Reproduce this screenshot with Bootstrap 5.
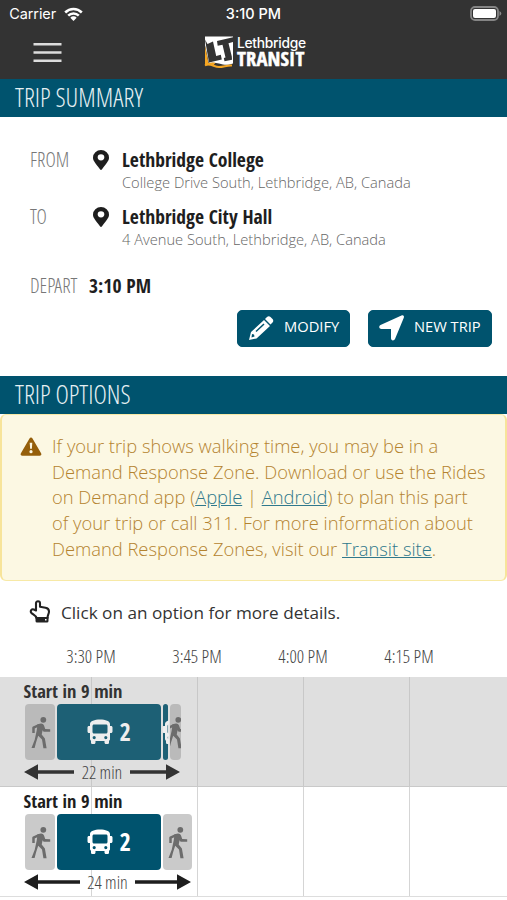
<!DOCTYPE html>
<html lang="en">
<head>
<meta charset="utf-8">
<meta name="viewport" content="width=device-width, initial-scale=1">
<title>Lethbridge Transit – Trip Options</title>
<link href="https://cdn.jsdelivr.net/npm/bootstrap@5.3.0/dist/css/bootstrap.min.css" rel="stylesheet">
<style>
  body { font-family: "Open Sans", "Noto Sans", sans-serif; color: #1e1e1e; background: #fff; width: 507px; height: 900px; overflow: hidden; }
  .cond { font-family: "Open Sans Condensed", "Open Sans", sans-serif; font-stretch: 75%; white-space: nowrap; }
  .cond-light { font-family: "Open Sans Condensed Light", "Open Sans", sans-serif; font-stretch: 75%; font-weight: 300; white-space: nowrap; }
  .topbar { background: #333; color: #fff; height: 79px; }
  .status-row { height: 27px; font: 500 14.5px/27px Inter, sans-serif; }
  .status-row > div { width: 33.333%; }
  .carrier { letter-spacing: -.1px; font-weight: 400; }
  .nav-row { height: 52px; }
  .brand-a { font: 500 13.8px/15px Inter, sans-serif; letter-spacing: -.28px; margin-top: 1px; }
  .brand-b { font-weight: 800; font-size: 20.5px; line-height: 15px; letter-spacing: .15px; -webkit-text-stroke: .5px #fff; }
  .section-title { background: #00536e; color: #e6f0f3; height: 38px; padding-left: 15px; font-size: 25.7px; line-height: 37px; }
  .summary { height: 259px; padding: 30px 15px 0 30px; }
  .lbl { color: #777; font-size: 19.8px; line-height: 26px; }
  .lbl-col { width: 63px; }
  .depart-col { width: 59px; }
  .pin-col { width: 29px; padding-top: 3px; }
  .place { font-weight: 700; font-size: 19.6px; line-height: 26px; }
  .addr { font-weight: 300; font-size: 14.68px; line-height: 19px; color: #666; }
  .stop { height: 57px; }
  .actions { margin-top: 10.5px; }
  .btn-trip { --bs-btn-bg: #00536e; --bs-btn-color: #fff; --bs-btn-border-color: #00536e; height: 37px; border-radius: 5px; font-size: 14.7px; line-height: 20px; white-space: nowrap; }
  .btn-trip span { padding-bottom: 4px; }
  .btn-modify { width: 113px; margin-right: 18px; }
  .btn-modify svg { margin-left: 9px; margin-right: 9px; }
  .btn-new { width: 124px; }
  .notice { height: 167px; background: #fcf8e3; border: 1px solid #f7e9a6; border-left: 2px solid #f7e49a; border-right: 2px solid #f7e49a; border-radius: 6px; color: #b4832f; font-weight: 300; font-size: 18.35px; line-height: 25.7px; padding: 18px 0 0 18px; gap: 10px; }
  .notice p { white-space: nowrap; }
  .notice a { color: #2f788c; }
  .hint { height: 63px; padding: 19px 0 0 29px; font-size: 17.15px; line-height: 26px; color: #333; gap: 10px; }
  .times { height: 33px; padding-left: 38px; font-size: 18.4px; line-height: 24px; color: #444; }
  .times span { width: 106px; text-align: center; }
  .option { height: 110px; padding-left: 24px; border-bottom: 1px solid #ddd; background: repeating-linear-gradient(to right, transparent 0 105px, #d5d5d5 105px 106px) 92px 0 / 424px 100% no-repeat, linear-gradient(#d5d5d5,#d5d5d5) 91px 0 / 1px 100% no-repeat #fff; }
  .option.active { background: repeating-linear-gradient(to right, transparent 0 105px, #c8c8c8 105px 106px) 92px 0 / 424px 100% no-repeat, linear-gradient(#c8c8c8,#c8c8c8) 91px 0 / 1px 100% no-repeat #dfdfdf; border-color: #c9c9c9; color: #333; }
  .start { font-size: 18.5px; line-height: 22px; font-weight: 700; padding-top: 3px; height: 27px; margin-left: -.5px; }
  .legs { gap: 2px; padding-left: 1px; }
  .leg { height: 56px; border-radius: 4px; overflow: hidden; }
  .walk { background: #cacaca; color: #6c6c6c; }
  .active .walk { background: #bababa; }
  .ride { background: #00536e; color: #fff; font-size: 24.5px; font-weight: 700; line-height: 56px; width: 103.5px; }
  .ride svg { margin-right: 7px; }
  .active .ride { background: #1d6075; color: #eee; }
  .active .ride.w5 { width: 5px; overflow: visible; }
  .ride-clip { width: 7px; height: 26px; overflow: hidden; display: flex; flex: none; }
  .w30 { width: 30px; } .w29 { width: 29px; } .w11 { width: 11px; }
  .walk svg { margin-left: 1px; }
  .span-22 { width: 156px; } .span-24 { width: 167px; }
  .duration { line-height: 24px; }
  .duration .cond-light { font-size: 18.2px; color: #444; }
  svg { display: block; flex: none; }
</style>
<script src="https://cdn.jsdelivr.net/npm/bootstrap@5.3.0/dist/js/bootstrap.bundle.min.js"></script>
</head>
<body>
<svg width="0" height="0" class="d-none">
  <symbol id="pin" viewBox="0 0 384 512" preserveAspectRatio="none"><path fill="currentColor" fill-rule="evenodd" d="M172 502C27 291 0 270 0 192a192 192 0 0 1 384 0c0 78-27 99-172 310-9 13-31 13-40 0zM192 267a80 80 0 1 0 0-160 80 80 0 0 0 0 160z"/></symbol>
  <symbol id="bus" viewBox="0 0 26 26"><path fill="currentColor" fill-rule="evenodd" d="M13 .5c5.500 0 10 1.500 10 4.500v2h1c1 0 1.500.7 1.500 1.500v4c0 .9-.6 1.500-1.500 1.500h-1v6c0 1-.5 1.500-1 1.800V23.500c0 1-.7 1.500-1.500 1.500h-1.500c-.9 0-1.500-.6-1.500-1.500V22h-9v1.500c0 .9-.6 1.500-1.500 1.500H5.500C4.700 25 4 24.500 4 23.500V21.800c-.6-.4-1-1-1-1.800v-6H2C1.100 14 .5 13.400.5 12.500v-4C.5 7.700 1 7 2 7h1V5C3 2 7.500.5 13 .5zM7 5.500C6 5.500 5.500 6.200 5.500 7v6c0 .9.600 1.500 1.500 1.500h12c.9 0 1.500-.6 1.500-1.500V7c0-.8-.5-1.500-1.500-1.500zM7.200 17a1.600 1.600 0 1 0 0 3.200 1.600 1.600 0 0 0 0-3.200zM18.800 17a1.600 1.600 0 1 0 0 3.200 1.600 1.600 0 0 0 0-3.200z"/></symbol>
  <symbol id="walker" viewBox="0 0 20 33"><circle cx="12.300" cy="3.800" r="2.900" fill="currentColor"/><path fill="none" stroke="currentColor" stroke-linejoin="round" d="M2.500 17V11.700L8 9.200" stroke-width="2.500"/><path fill="currentColor" d="M6.500 8.200l3.500-.7c1.800 0 2.800 1 3.200 2.400l1 3.100 5 .2v2.500h-6.600l-1-1.500-.9 4.200 3.200 4 1.700 9.800h-3.200l-1.400-8.600-3.800-3.800-2.100 6.500L3.600 32H.5l3.200-8.300 2-9.200z"/></symbol>
</svg>

<header class="topbar">
  <div class="status-row d-flex">
    <div class="d-flex align-items-center ps-2"><span class="carrier me-1 pe-1">&#8202;Carrier</span>
      <svg width="19" height="14" viewBox="0 0 19 14"><g fill="none" stroke="#fff" stroke-width="2.500"><path d="M1.200 5.500a11.700 11.700 0 0 1 16.600 0"/><path d="M4.200 8.600a7.500 7.500 0 0 1 10.600 0"/></g><path fill="#fff" d="M6.300 10.700a4.500 4.500 0 0 1 6.400 0L9.500 13.900z"/></svg>
    </div>
    <div class="text-center">3:10 PM</div>
    <div class="d-flex justify-content-end align-items-center">
      <svg class="me-1" width="33" height="15" viewBox="0 0 33 15"><rect x="1" y="1" width="27" height="13" rx="4" fill="none" stroke="#858585" stroke-width="1.800"/><rect x="3" y="3" width="23" height="9" rx="2" fill="#fff"/><path d="M29.500 5v5c2.500-1.500 2.500-3.500 0-5z" fill="#8b8b8b"/></svg>
    </div>
  </div>
  <nav class="nav-row d-flex">
    <svg class="mt-3 ms-4" width="180" height="21" viewBox="0 0 180 21"><path d="M9.500 1.300h28M9.500 9.500h28M9.500 17.700h28" stroke="#ddd" stroke-width="2.600"/></svg>
    <div class="d-flex pt-2">
      <svg width="29" height="34" viewBox="0 0 29 34"><path fill="#fff" d="M1 1.500h28v27c-5 2-9 1.500-14 0-4-1-8-1-10 0L1 10z"/><path fill="#f5a623" d="M1 11l3.500 17q3-1 7-.3l-2 2.500L1 30z"/><path fill="none" stroke="#f5a623" stroke-width="2" d="M1 30.500c5-3 9 1.500 14 1.500s8-2 13-1.500"/><path fill="#333" d="M1 4.500l2.500 4.500L9 6.500l3.200 14.500 4.600-1.200 1 4.700L5 27.500zM13 6l16-3.700V7l-4.500 1.200 3.300 13.300.2 3.300-7.500 1.500-.7-3.300 1.700-.6L18.500 9.700l-4.800 1.100z"/></svg>
      <div class="ms-1"><div class="brand-a">Lethbridge</div><div class="brand-b cond">TRANSIT</div></div>
    </div>
  </nav>
</header>

<h1 class="section-title cond-light m-0">TRIP SUMMARY</h1>
<section class="summary">
  <div class="stop d-flex">
    <div class="lbl lbl-col cond-light">FROM</div>
    <div class="pin-col"><svg width="16" height="20"><use href="#pin"/></svg></div>
    <div><div class="place cond">Lethbridge College</div><div class="addr">College Drive South, Lethbridge, AB, Canada</div></div>
  </div>
  <div class="stop d-flex">
    <div class="lbl lbl-col cond-light">TO</div>
    <div class="pin-col"><svg width="16" height="20"><use href="#pin"/></svg></div>
    <div><div class="place cond">Lethbridge City Hall</div><div class="addr">4 Avenue South, Lethbridge, AB, Canada</div></div>
  </div>
  <div class="d-flex pt-2 mt-1"><span class="lbl depart-col cond-light">DEPART</span><span class="place cond">3:10 PM</span></div>
  <div class="actions d-flex justify-content-end">
    <button class="btn btn-trip btn-modify d-flex align-items-center p-0">
      <svg width="28" height="28" viewBox="0 0 28 28"><path fill="#fff" d="M4 18L17 6l6 6L9.500 24.500 2 26zM18 5l2-2c1-1 2.500-1 3.500 0l2 2c1 1 1 2.500 0 3.500l-2 2z"/><path d="M9 17.500l8-7.500" stroke="#00536e" stroke-width="1.500"/><path fill="#00536e" d="M5 20l2 .5.500 2-3 1z"/></svg>
      <span>MODIFY</span></button>
    <button class="btn btn-trip btn-new d-flex align-items-center p-0">
      <svg class="ms-2 me-2" width="29" height="28" viewBox="0 0 29 28"><path fill="#fff" d="M24.500 1.500c1.700-.7 3 .5 2.300 2.200L18 25c-.8 2-4 2-4-.7V15H4.500C2 15 1.500 12 3.500 11z"/></svg>
      <span>NEW TRIP</span></button>
  </div>
</section>

<h1 class="section-title cond-light m-0">TRIP OPTIONS</h1>
<div class="notice d-flex">
  <svg class="mt-1" width="22" height="20" viewBox="0 0 22 20"><path fill="#955f0b" d="M9.500 1.400c.7-1.200 2.300-1.200 3 0l8.600 14.800c.8 1.200-.1 2.600-1.500 2.600H2.400c-1.400 0-2.300-1.400-1.500-2.600z"/><path fill="#fcf8e3" d="M9.700 5.800h2.600l-.4 6h-1.800z"/><circle cx="11" cy="14.700" r="1.600" fill="#fcf8e3"/></svg>
  <p class="m-0">If your trip shows walking time, you may be in a<br>Demand Response Zone. Download or use the Rides<br>on Demand app (<a href="#">Apple</a> | <a href="#">Android</a>) to plan this part<br>of your trip or call 311. For more information about<br>Demand Response Zones, visit our <a href="#">Transit site</a>.</p>
</div>
<div class="hint d-flex">
  <svg width="22" height="24" viewBox="0 0 22 24"><path fill="none" stroke="#222" stroke-width="2.100" stroke-linejoin="round" d="M7.500 18C7 15.500 4 14.500 2.500 13c-1.700-2 .2-4.300 2.300-3.500L7 10.500V3.200c0-2.700 4-2.700 4 0v3.600l5.500 1c2.500.5 3.500 1.700 3.500 3.700 0 2.500-1.500 3.500-1.500 6.500z"/><path fill="#222" fill-rule="evenodd" d="M6.500 17h13v4q0 1.500-1.500 1.500H8q-1.500 0-1.500-1.500zM16 19v1.500h1.500V19z"/></svg>
  <span>Click on an option for more details.</span>
</div>
<div class="times cond-light d-flex"><span>3:30 PM</span><span>3:45 PM</span><span>4:00 PM</span><span>4:15 PM</span></div>

<div class="option active">
  <div class="start cond">Start in 9 min</div>
  <div class="legs d-flex">
    <div class="leg walk w30 d-flex align-items-center justify-content-center"><svg width="20" height="33"><use href="#walker"/></svg></div>
    <div class="leg ride cond d-flex align-items-center justify-content-center"><svg width="26" height="26"><use href="#bus"/></svg>2</div>
    <div class="leg ride w5 d-flex align-items-center justify-content-center"><span class="ride-clip"><svg width="26" height="26"><use href="#bus"/></svg></span></div>
    <div class="leg walk w11 d-flex align-items-center justify-content-center"><svg width="20" height="33"><use href="#walker"/></svg></div>
  </div>
  <div class="duration span-22 d-flex align-items-center justify-content-between">
    <svg width="50" height="16" viewBox="0 0 50 16"><path fill="currentColor" d="M0 8L14 .2v6h36v3.600H14v6z"/></svg><span class="cond-light">22 min</span>
    <svg width="50" height="16" viewBox="0 0 50 16"><path fill="currentColor" d="M50 8L36 .2v6H0v3.600h36v6z"/></svg>
  </div>
</div>
<div class="option">
  <div class="start cond">Start in 9 min</div>
  <div class="legs d-flex">
    <div class="leg walk w30 d-flex align-items-center justify-content-center"><svg width="20" height="33"><use href="#walker"/></svg></div>
    <div class="leg ride cond d-flex align-items-center justify-content-center"><svg width="26" height="26"><use href="#bus"/></svg>2</div>
    <div class="leg walk w29 d-flex align-items-center justify-content-center"><svg width="20" height="33"><use href="#walker"/></svg></div>
  </div>
  <div class="duration span-24 d-flex align-items-center justify-content-between">
    <svg width="56" height="16" viewBox="0 0 56 16"><path fill="currentColor" d="M0 8L14 .2v6h42v3.600H14v6z"/></svg><span class="cond-light">24 min</span>
    <svg width="56" height="16" viewBox="0 0 56 16"><path fill="currentColor" d="M56 8L42 .2v6H0v3.600h42v6z"/></svg>
  </div>
</div>
</body>
</html>
